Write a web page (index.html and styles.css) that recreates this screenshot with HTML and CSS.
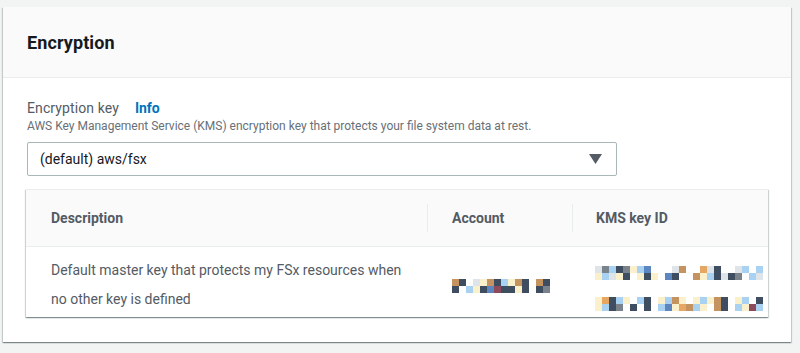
FILE: index.html
```html
<!DOCTYPE html>
<html lang="en">
    <head>
        <meta charset="UTF-8" />
        <title>Encryption</title>
        <link rel="stylesheet" href="styles.css">
    </head>
    <body>
        <div class="page">
            <section class="card">
                <header class="card-header">
                    <h2>Encryption</h2>
                </header>

                <div class="card-body">
                    <div class="field">
                        <div class="label-row">
                            <span class="label">Encryption key</span>
                            <a class="info" href="#">Info</a>
                        </div>
                        <p class="hint">
                            AWS Key Management Service (KMS) encryption key that protects your file system data at rest.
                        </p>
                        <div class="select">
                            <span>(default) aws/fsx</span>
                            <svg class="caret" width="13" height="10" viewBox="0 0 13 10">
                                <path d="M0 0 H13 L6.5 10 Z" fill="#545b64" />
                            </svg>
                        </div>
                    </div>

                    <div class="table">
                        <div class="thead">
                            <div class="th">Description</div>
                            <div class="th sep">Account</div>
                            <div class="th sep">KMS key ID</div>
                        </div>
                        <div class="row">
                            <div class="td desc">
                                Default master key that protects my FSx resources when<br />
                                no other key is defined
                            </div>
                            <div class="td account">
                                <!-- redacted account number -->
                                <div class="mosaic cols-14">
                                    <i class="b"></i><i class="a"></i><i class="w"></i><i class="l"></i><i class="c"></i><i class="b"></i><i class="a"></i><i class="d"></i><i class="c"></i><i class="b"></i><i class="a"></i><i class="w"></i><i class="b"></i><i class="a"></i>
                                    <i class="a"></i><i class="w"></i><i class="d"></i><i class="c"></i><i class="a"></i><i class="h"></i><i class="g"></i><i class="a"></i><i class="a"></i><i class="c"></i><i class="a"></i><i class="w"></i><i class="a"></i><i class="e"></i>
                                </div>
                            </div>
                            <div class="td kms">
                                <!-- redacted key id -->
                                <div class="mosaic cols-24">
                                    <i class="l"></i><i class="e"></i><i class="d"></i><i class="a"></i><i class="e"></i><i class="c"></i><i class="d"></i><i class="h"></i><i class="w"></i><i class="w"></i><i class="w"></i><i class="l"></i><i class="b"></i><i class="w"></i><i class="w"></i><i class="f"></i><i class="l"></i><i class="a"></i><i class="w"></i><i class="w"></i><i class="l"></i><i class="d"></i><i class="w"></i><i class="d"></i>
                                    <i class="c"></i><i class="d"></i><i class="l"></i><i class="c"></i><i class="a"></i><i class="w"></i><i class="c"></i><i class="a"></i><i class="c"></i><i class="w"></i><i class="h"></i><i class="a"></i><i class="w"></i><i class="w"></i><i class="b"></i><i class="c"></i><i class="d"></i><i class="a"></i><i class="l"></i><i class="a"></i><i class="e"></i><i class="w"></i><i class="d"></i><i class="l"></i>
                                </div>
                                <div class="mosaic cols-24">
                                    <i class="c"></i><i class="f"></i><i class="a"></i><i class="d"></i><i class="c"></i><i class="w"></i><i class="d"></i><i class="a"></i><i class="w"></i><i class="c"></i><i class="d"></i><i class="b"></i><i class="c"></i><i class="w"></i><i class="c"></i><i class="d"></i><i class="c"></i><i class="b"></i><i class="a"></i><i class="w"></i><i class="c"></i><i class="d"></i><i class="w"></i><i class="a"></i>
                                    <i class="c"></i><i class="d"></i><i class="a"></i><i class="e"></i><i class="w"></i><i class="a"></i><i class="w"></i><i class="a"></i><i class="w"></i><i class="d"></i><i class="h"></i><i class="c"></i><i class="f"></i><i class="b"></i><i class="d"></i><i class="c"></i><i class="w"></i><i class="b"></i><i class="a"></i><i class="w"></i><i class="d"></i><i class="c"></i><i class="g"></i><i class="d"></i>
                                </div>
                            </div>
                        </div>
                    </div>
                </div>
            </section>
        </div>
    </body>
</html>
```

FILE: styles.css
```css
* {
    margin: 0;
    padding: 0;
    box-sizing: border-box;
}

body {
    font-family: Roboto, "Liberation Sans", sans-serif;
    background: #f2f3f3;
    color: #16191f;
    font-size: 14px;
}

.page {
    padding: 7px 9px 11px 3px;
}

.card {
    background: #fff;
    box-shadow: 0 1px 1px 0 rgba(0, 28, 36, 0.3),
        1px 1px 1px 0 rgba(0, 28, 36, 0.15),
        -1px 1px 1px 0 rgba(0, 28, 36, 0.15);
}

.card-header {
    background: #fafafa;
    border-bottom: 1px solid #eaeded;
    padding: 24px 24px 22px;
}

.card-header h2 {
    font-size: 18px;
    line-height: 24px;
    font-weight: 700;
    color: #16191f;
    letter-spacing: 0.1px;
}

.card-body {
    padding: 20px 23px 25px 24px;
}

.label-row {
    display: flex;
    align-items: baseline;
    gap: 16px;
    line-height: 20px;
}

.label {
    color: #545b64;
    font-size: 14px;
    letter-spacing: 0.1px;
}

.info {
    color: #0073bb;
    font-weight: 700;
    font-size: 14px;
    text-decoration: none;
}

.hint {
    color: #687078;
    font-size: 12px;
    line-height: 16px;
}

.select {
    margin-top: 8px;
    width: 590px;
    height: 34px;
    border: 1px solid #aab7b8;
    border-radius: 2px;
    display: flex;
    align-items: center;
    justify-content: space-between;
    padding: 0 14px 0 12px;
    color: #16191f;
}

.caret {
    display: block;
}

.table {
    margin-top: 13px;
    margin-left: -1px;
    border-top: 1px solid #eaeded;
    box-shadow: 0 1px 1px 0 rgba(0, 28, 36, 0.3),
        1px 1px 1px 0 rgba(0, 28, 36, 0.15),
        -1px 1px 1px 0 rgba(0, 28, 36, 0.15);
}

.thead,
.row {
    display: grid;
    grid-template-columns: 401px 145px 1fr;
}

.thead {
    background: #fafafa;
    border-bottom: 1px solid #eaeded;
    height: 57px;
}

.th {
    position: relative;
    display: flex;
    align-items: center;
    padding-left: 25px;
    font-weight: 700;
    color: #545b64;
}

.th.sep::before {
    content: "";
    position: absolute;
    left: 0;
    top: 14px;
    bottom: 14px;
    border-left: 1px solid #eaeded;
}

.th:last-child {
    padding-left: 24px;
}

.row {
    height: 70px;
}

.td {
    padding-left: 25px;
    color: #545b64;
}

.desc {
    line-height: 29px;
    padding-top: 9px;
}

.account {
    display: flex;
    align-items: center;
    padding-top: 8px;
}

.kms {
    padding-left: 23px;
    padding-top: 19px;
    display: flex;
    flex-direction: column;
    gap: 17px;
}

.mosaic {
    display: grid;
    grid-auto-rows: 7px;
}

.cols-14 {
    grid-template-columns: repeat(14, 7px);
}

.cols-24 {
    grid-template-columns: repeat(24, 7px);
}

.mosaic i { display: block; }
.mosaic .a { background: #3f4d61; }
.mosaic .b { background: #c4935f; }
.mosaic .c { background: #fbf0cc; }
.mosaic .d { background: #a9d2f2; }
.mosaic .e { background: #7a838c; }
.mosaic .f { background: #e6a763; }
.mosaic .g { background: #8c4a5a; }
.mosaic .h { background: #5c86c0; }
.mosaic .l { background: #dfe4e8; }
.mosaic .w { background: #fff; }
```
